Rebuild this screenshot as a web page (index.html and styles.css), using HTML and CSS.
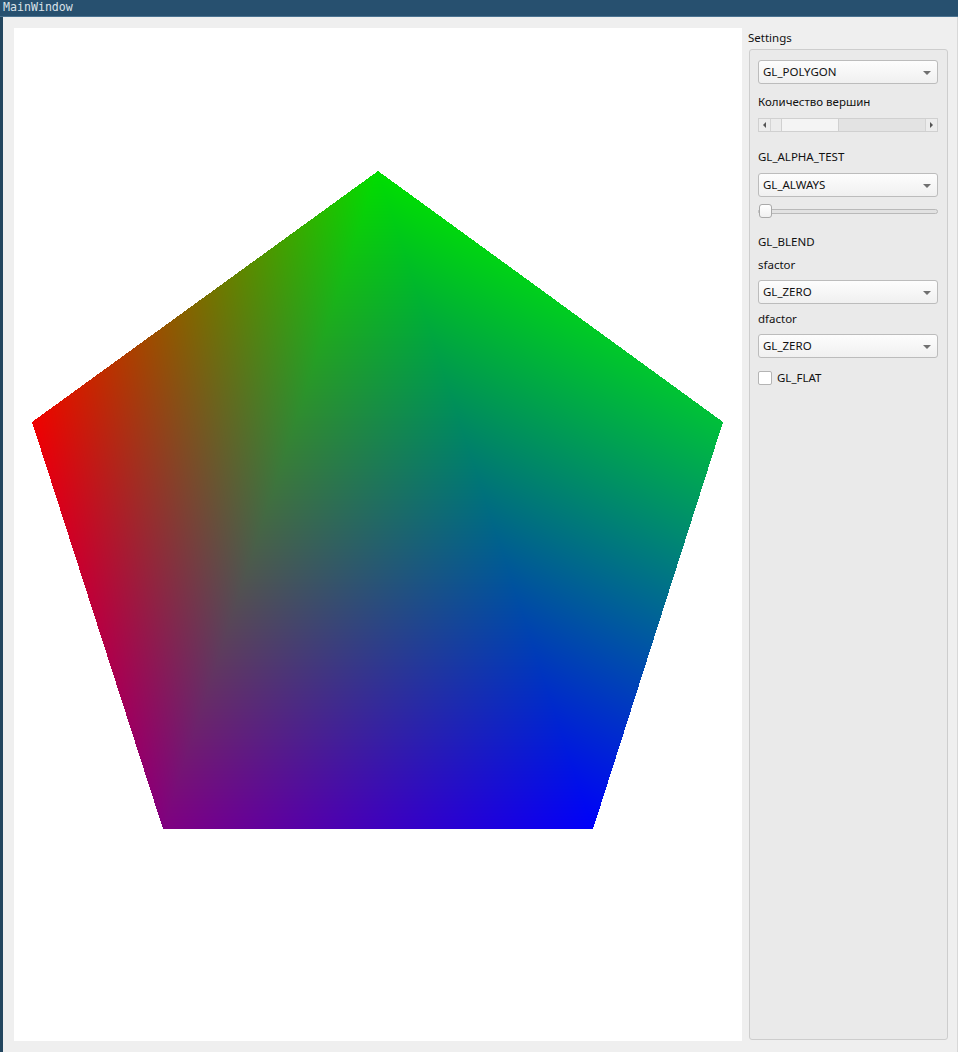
FILE: index.html
```html
<!DOCTYPE html>
<html lang="ru">
<head>
<meta charset="utf-8">
<title>MainWindow</title>
<link rel="stylesheet" href="styles.css">
</head>
<body>
<div class="window">
  <div class="titlebar">MainWindow</div>
  <div class="client">
    <canvas id="gl" class="gl" width="728" height="1013"></canvas>
    <div class="panel">
      <div class="panel-title">Settings</div>
      <div class="group">
        <div class="combo"><span>GL_POLYGON</span><i class="arrow"></i></div>
        <div class="label m9">Количество вершин</div>
        <div class="scrollbar">
          <div class="sb-btn"><i class="tri-left"></i></div>
          <div class="sb-track">
            <div class="sb-pre"></div>
            <div class="sb-handle"></div>
          </div>
          <div class="sb-btn sb-right"><i class="tri-right"></i></div>
        </div>
        <div class="label m16">GL_ALPHA_TEST</div>
        <div class="combo m8"><span>GL_ALWAYS</span><i class="arrow"></i></div>
        <div class="slider">
          <div class="groove"></div>
          <div class="knob"></div>
        </div>
        <div class="label m15">GL_BLEND</div>
        <div class="label m6">sfactor</div>
        <div class="combo m7"><span>GL_ZERO</span><i class="arrow"></i></div>
        <div class="label m6">dfactor</div>
        <div class="combo m7"><span>GL_ZERO</span><i class="arrow"></i></div>
        <label class="check"><span class="box"></span><span class="check-text">GL_FLAT</span></label>
      </div>
    </div>
  </div>
</div>
<script src="script.js"></script>
</body>
</html>
```

FILE: styles.css
```css
* { box-sizing: border-box; }
html, body { margin: 0; padding: 0; }
body {
  width: 958px;
  height: 1052px;
  overflow: hidden;
  background: #efefef;
  font-family: "Noto Sans", "Open Sans", sans-serif;
  font-size: 11.5px;
  color: #111111;
}
.window {
  display: flex;
  flex-direction: column;
  height: 1052px;
}
.titlebar {
  height: 17px;
  background: #27506f;
  border-bottom: 1px solid #4b7391;
  color: #d9e1e8;
  font-family: "DejaVu Sans Mono", "Liberation Mono", monospace;
  font-size: 11.6px;
  line-height: 15px;
  padding-left: 3px;
}
.client {
  flex: 1;
  display: flex;
  gap: 6px;
  border-left: 3px solid #23465f;
  border-right: 1px solid #d8d8d8;
  padding: 11px 9px 11px 11px;
}
.gl {
  display: block;
  width: 728px;
  height: 1013px;
  background: #ffffff;
}
.panel {
  width: 200px;
  display: flex;
  flex-direction: column;
}
.panel-title {
  height: 21px;
  padding-top: 1px;
  line-height: 17px;
}
.group {
  flex: 1;
  margin: 0 0 1px 1px;
  border: 1px solid #cdcdcd;
  border-radius: 3px;
  background: #eaeaea;
  padding: 10px 9px 0 8px;
  display: flex;
  flex-direction: column;
}
.combo {
  position: relative;
  height: 24px;
  border: 1px solid #bcbcbc;
  border-radius: 3px;
  background: linear-gradient(#fdfdfd, #f0f0f0);
  padding-left: 4px;
  line-height: 22px;
  flex: none;
}
.arrow {
  position: absolute;
  right: 6px;
  top: 10px;
  width: 0;
  height: 0;
  border-left: 4px solid transparent;
  border-right: 4px solid transparent;
  border-top: 4px solid #707070;
}
.label {
  height: 17px;
  line-height: 17px;
  flex: none;
}
.m6 { margin-top: 6px; }
.m7 { margin-top: 7px; }
.m8 { margin-top: 8px; }
.m9 { margin-top: 9px; }
.m15 { margin-top: 15px; }
.m16 { margin-top: 16px; }

.scrollbar {
  margin-top: 8px;
  height: 14px;
  display: flex;
  border: 1px solid #d0d0d0;
  background: #e3e3e3;
  flex: none;
}
.sb-btn {
  width: 12px;
  display: flex;
  align-items: center;
  justify-content: center;
  background: #ededed;
  border-right: 1px solid #d4d4d4;
}
.sb-right {
  border-right: none;
  border-left: 1px solid #d4d4d4;
}
.sb-track {
  flex: 1;
  display: flex;
}
.sb-pre {
  width: 11px;
  background: #ececec;
  border-right: 1px solid #d0d0d0;
}
.sb-handle {
  width: 57px;
  background: #f4f4f4;
  border-right: 1px solid #d0d0d0;
}
.tri-left, .tri-right {
  width: 0;
  height: 0;
  border-top: 3px solid transparent;
  border-bottom: 3px solid transparent;
}
.tri-left { border-right: 3px solid #555; }
.tri-right { border-left: 3px solid #555; }

.slider {
  position: relative;
  margin-top: 7px;
  height: 14px;
  flex: none;
}
.groove {
  position: absolute;
  left: 0;
  right: 0;
  top: 5px;
  height: 5px;
  border: 1px solid #b9b9b9;
  border-radius: 3px;
  background: #e2e2e2;
}
.knob {
  position: absolute;
  left: 1px;
  top: 0;
  width: 13px;
  height: 14px;
  border: 1px solid #a9a9a9;
  border-radius: 3px;
  background: linear-gradient(#ffffff, #f0f0f0);
}
.check {
  margin-top: 12px;
  display: flex;
  align-items: center;
  gap: 5px;
  height: 15px;
}
.box {
  width: 14px;
  height: 14px;
  background: #ffffff;
  border: 1px solid #b4b4b4;
  border-radius: 2px;
}
.check-text { line-height: 15px; }
```

FILE: script.js
```javascript
(function () {
  var c = document.getElementById('gl');
  var ctx = c.getContext('2d');
  var W = c.width, H = c.height;
  var img = ctx.createImageData(W, H);
  var d = img.data;
  for (var i = 0; i < d.length; i += 4) { d[i] = 255; d[i + 1] = 255; d[i + 2] = 255; d[i + 3] = 255; }
  var T = { x: 364, y: 143, c: [0, 222, 0] };
  var R = { x: 709, y: 394, c: [0, 192, 58] };
  var BR = { x: 579, y: 801, c: [0, 0, 250] };
  var BL = { x: 149, y: 801, c: [128, 0, 128] };
  var L = { x: 18, y: 394, c: [240, 0, 0] };
  function tri(a, b, e) {
    var minX = Math.floor(Math.min(a.x, b.x, e.x)), maxX = Math.ceil(Math.max(a.x, b.x, e.x));
    var minY = Math.floor(Math.min(a.y, b.y, e.y)), maxY = Math.ceil(Math.max(a.y, b.y, e.y));
    var den = (b.y - e.y) * (a.x - e.x) + (e.x - b.x) * (a.y - e.y);
    for (var y = minY; y <= maxY; y++) {
      for (var x = minX; x <= maxX; x++) {
        var px = x + 0.5, py = y + 0.5;
        var w1 = ((b.y - e.y) * (px - e.x) + (e.x - b.x) * (py - e.y)) / den;
        var w2 = ((e.y - a.y) * (px - e.x) + (a.x - e.x) * (py - e.y)) / den;
        var w3 = 1 - w1 - w2;
        if (w1 < -1e-6 || w2 < -1e-6 || w3 < -1e-6) continue;
        if (x < 0 || y < 0 || x >= W || y >= H) continue;
        var k = (y * W + x) * 4;
        for (var j = 0; j < 3; j++) {
          d[k + j] = Math.round(w1 * a.c[j] + w2 * b.c[j] + w3 * e.c[j]);
        }
      }
    }
  }
  tri(T, R, BR);
  tri(T, BR, BL);
  tri(T, BL, L);
  ctx.putImageData(img, 0, 0);
})();
```
